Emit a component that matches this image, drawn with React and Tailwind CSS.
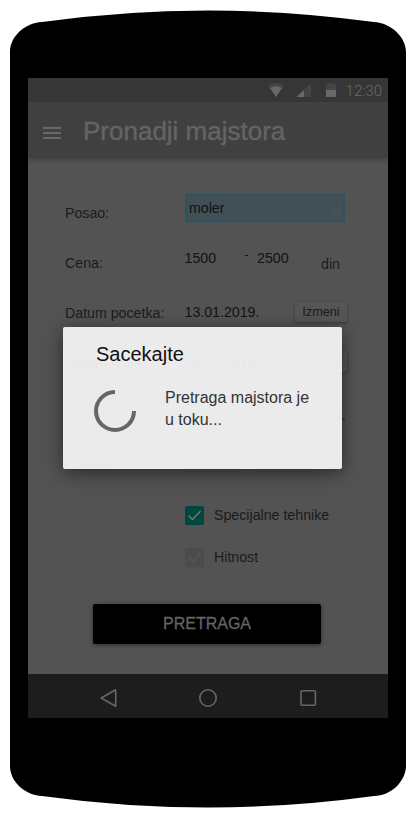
const ARIAL = "font-['Liberation_Sans',Arial,sans-serif]";

function PhoneBody() {
  return (
    <svg className="absolute inset-0" width="416" height="818" viewBox="0 0 416 818">
      <path
        d="M10 52C10 37 24 23 42 22Q208 -1 374 22C391 23 406 37 406 52V766C406 781 391 796 374 796Q208 819 42 796C24 795 10 781 10 766Z"
        fill="#000"
      />
    </svg>
  );
}

function StatusBar() {
  return (
    <div className="relative z-10 flex h-6 shrink-0 items-center justify-end bg-[#363636] pr-1.5">
      <svg width="76" height="24" viewBox="0 0 76 24">
        <path d="M0 7.2Q8 2.8 16 7.2L8 19Z" fill="#454545" />
        <path d="M2 10Q8 6.6 14 10L8 19Z" fill="#686868" />
        <path d="M43 5V19H28.5Z" fill="#454545" />
        <path d="M36 12V19H28.5Z" fill="#686868" />
        <path d="M58 7Q58 6 59.5 6Q60 5 63 5Q66 5 66.5 6Q68 6 68 7V12H58Z" fill="#454545" />
        <path d="M58 12H68V18Q68 19 67 19H59Q58 19 58 18Z" fill="#686868" />
      </svg>
      <span className="w-[38px] pt-[2px] text-right font-['Roboto',sans-serif] text-[15px] font-light leading-6 text-[#6b6b6b]">12:30</span>
    </div>
  );
}

function AppBar() {
  return (
    <header className="flex h-14 shrink-0 items-center bg-[#404040] pl-[15px] text-[#646464] shadow-[0_2px_4px_#404040]">
      <div className="mt-1.5 flex flex-col gap-[3px]">
        <i className="h-[2px] w-[18px] bg-[#686868]" />
        <i className="h-[2px] w-[18px] bg-[#686868]" />
        <i className="h-[2px] w-[18px] bg-[#686868]" />
      </div>
      <h1 className="ml-[22px] mt-[2px] whitespace-nowrap text-[26px] leading-8 [-webkit-text-stroke:0.4px_#646464]">Pronadji majstora</h1>
    </header>
  );
}

function Row({ label, children }) {
  return (
    <div className="flex h-[50px] items-center">
      <span className="w-[119.5px] shrink-0 whitespace-nowrap">{label}</span>
      {children}
    </div>
  );
}

function Range({ from, to, unit, lowDash }) {
  return (
    <>
      <span className="-mt-[6px] h-6 w-[54.5px] border-b border-[#4f4f4f] text-[#121212]">{from}</span>
      <span className={lowDash ? "-mt-[10px] w-[18px] pl-[5px]" : "-mt-[17px] w-[18px] pl-[5px]"}>-</span>
      <span className="-mt-[6px] h-6 w-[55px] border-b border-[#4f4f4f] text-[#121212]">{to}</span>
      <span className={lowDash ? "ml-[6px] mt-[4px]" : "ml-[9px] mt-[2px]"}>{unit}</span>
    </>
  );
}

function DateValue({ date, low }) {
  return (
    <>
      <span className={low ? "mt-[3px] w-[110.5px] text-[#121212]" : "-mt-[2px] w-[110.5px] text-[#121212]"}>{date}</span>
      <button className="-mt-[2px] h-5 w-[52px] rounded-[2px] bg-[#555] text-[12.7px] leading-5 text-[#1b1b1b] shadow-[0_1px_3px_#383838]">
        Izmeni
      </button>
    </>
  );
}

function Check({ label, on }) {
  return (
    <div className="flex h-[42px] items-center gap-[10px]">
      <span className={on ? "rounded-[2px] bg-[#00483f]" : "rounded-[2px] bg-[#4c4c4c]"}>
        <svg width="19" height="19" viewBox="0 0 19 19" fill="none">
          <path d="M3.5 9.5L7.5 13.5L15.5 5" stroke={on ? "#777" : "#585858"} strokeWidth="1.4" />
        </svg>
      </span>
      <span>{label}</span>
    </div>
  );
}

function NavBar() {
  return (
    <nav className="flex h-11 shrink-0 items-center bg-[#1d1d1d] pl-[70px] pt-1">
      <svg width="220" height="24" viewBox="0 0 220 24" fill="none" stroke="#666" strokeWidth="1.6" strokeLinejoin="round">
        <path d="M3.2 12L17.7 3.8V20.2Z" />
        <circle cx="110" cy="12" r="8.2" />
        <rect x="203" y="4.8" width="14.4" height="14.4" rx="1" />
      </svg>
    </nav>
  );
}

function Dialog() {
  return (
    <section className="absolute left-[35px] top-[249px] h-[142px] w-[279px] rounded-[2px] bg-[#f3f3f3]/95 pl-[31px] pt-[15px] text-[#111] shadow-[0_4px_18px_rgba(0,0,0,0.5)]">
      <h2 className="ml-[2px] text-[20px] leading-6">Sacekajte</h2>
      <div className="mt-[21px] flex">
        <svg className="mt-[3px]" width="42" height="42" viewBox="0 0 42 42" fill="none">
          <path d="M21 2A19 19 0 1 0 40 21" stroke="#666" strokeWidth="4" />
        </svg>
        <p className="ml-[29px] text-[16px] leading-[22px] text-[#333]">
          Pretraga majstora je
          <br />u toku...
        </p>
      </div>
    </section>
  );
}

export default function App() {
  return (
    <div className={`relative h-[818px] w-[416px] overflow-hidden bg-white pl-7 pt-[78px] ${ARIAL}`}>
      <PhoneBody />
      <div className="relative flex h-[640px] w-[360px] flex-col overflow-hidden bg-[#535353]">
        <StatusBar />
        <AppBar />
        <main className="flex-1 pl-[37px] pt-[30px] text-[14.2px] leading-5 text-[#1b1b1b]">
          <Row label="Posao:">
            <div className="-mt-[10px] ml-[0.5px] flex h-7 w-40 justify-between rounded-[1px] border-2 border-[#2c5362] bg-[#414f56] pl-[2px] leading-6 text-[#121212]">
              moler
              <svg className="mr-[2px] mt-[7px]" width="11" height="12" viewBox="0 0 11 12">
                <path d="M11 0V12H0Z" fill="#485257" />
              </svg>
            </div>
          </Row>
          <Row label="Cena:"><Range from="1500" to="2500" unit="din" /></Row>
          <Row label="Datum pocetka:"><DateValue date="13.01.2019." /></Row>
          <Row label="Datum kraja:"><DateValue date="23.01.2019." low /></Row>
          <Row label="Iskustvo:"><Range from="3" to="20" unit="god." lowDash /></Row>
          <Row label="Ocene:"><Range from="3.75" to="5" unit="" lowDash /></Row>
          <div className="ml-[120px] mt-[6px]">
            <Check label="Specijalne tehnike" on />
            <Check label="Hitnost" />
          </div>
          <button className="ml-7 mt-[26px] block h-10 w-[228px] rounded-[2px] bg-black text-[16px] text-[#646464] shadow-[0_1px_4px_#2b2b2b] [-webkit-text-stroke:0.3px_#646464]">
            PRETRAGA
          </button>
        </main>
        <NavBar />
        <Dialog />
      </div>
    </div>
  );
}
